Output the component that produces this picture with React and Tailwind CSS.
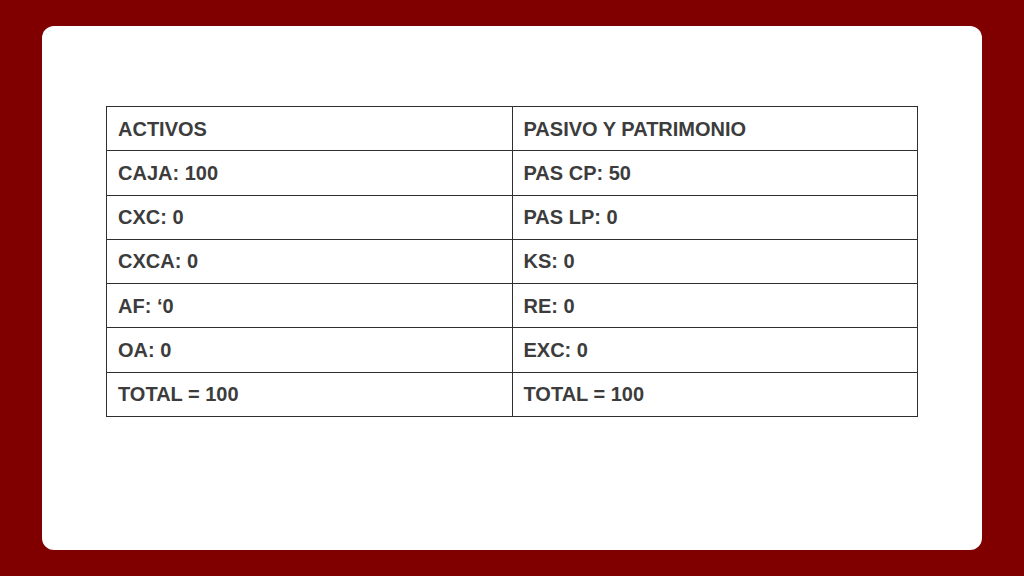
const rows = [
  ["ACTIVOS", "PASIVO Y PATRIMONIO"],
  ["CAJA: 100", "PAS CP: 50"],
  ["CXC: 0", "PAS LP: 0"],
  ["CXCA: 0", "KS: 0"],
  ["AF: \u20180", "RE: 0"],
  ["OA: 0", "EXC: 0"],
  ["TOTAL = 100", "TOTAL = 100"],
];

export default function App() {
  return (
    <div className="w-[1024px] h-[576px] bg-[#800000] px-[42px] py-[26px]" style={{ fontFamily: '"Liberation Sans", Arial, sans-serif' }}>
      <div className="h-full w-full bg-white rounded-[12px] pt-[80px] flex justify-center">
        <table className="w-[812px] h-[311px] border-collapse self-start">
          <tbody>
            {rows.map((r, i) => (
              <tr key={i}>
                {r.map((c, j) => (
                  <td
                    key={j}
                    className="w-1/2 border-[1.5px] border-[#2e2e2e] pl-[11px] text-[20px] font-bold text-[#3c3c3c] leading-none"
                  >
                    {c}
                  </td>
                ))}
              </tr>
            ))}
          </tbody>
        </table>
      </div>
    </div>
  );
}
